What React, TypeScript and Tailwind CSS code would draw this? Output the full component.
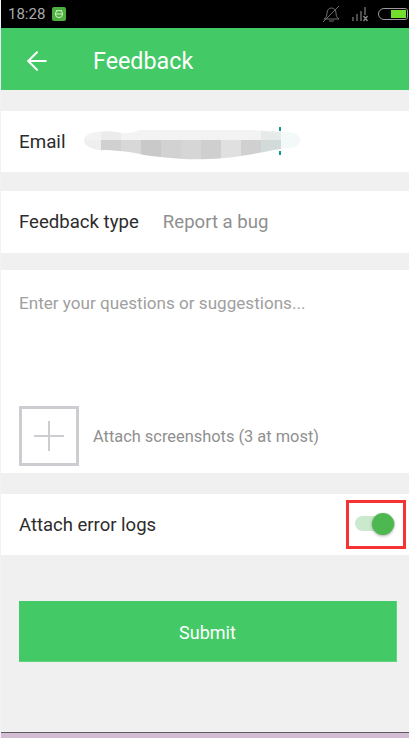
import React from 'react';
import { ArrowLeft } from 'lucide-react';

const StatusBar = () => (
  <div className="h-[28px] bg-black flex items-center justify-between pl-[7px] pr-[1px] shrink-0">
    <div className="flex items-center gap-[7px]">
      <span className="text-[15px] text-[#a8a8a8] leading-none">18:28</span>
      <div className="w-[14px] h-[14px] rounded-[2px] bg-[#4caf3f] flex items-center justify-center">
        <svg width="10" height="10" viewBox="0 0 10 10" fill="none" stroke="#d5f2c8" strokeWidth="1">
          <circle cx="5" cy="5" r="3.6" />
          <path d="M2 5h6M2.2 1l1 1.2M7.8 1l-1 1.2" />
        </svg>
      </div>
    </div>
    <div className="flex items-center">
      <svg width="20" height="18" viewBox="0 0 20 18" fill="none" stroke="#6e6e6e" strokeWidth="1" className="mr-[11px]">
        <path d="M3 14c2-1 3-3 3-6 0-3 2-5 4.500-5s4.500 2 4.500 5c0 3 1 5 3 6z" />
        <path d="M8 16h5M18 1 2 17" />
      </svg>
      <svg width="18" height="16" viewBox="0 0 18 16" fill="#4d4d4d" className="mr-[8px]">
        <rect x="0" y="11" width="2" height="4" />
        <rect x="4" y="8" width="2" height="7" />
        <rect x="8" y="5" width="2" height="10" />
        <rect x="12" y="1" width="2" height="8" />
        <path d="M11.500 10l4 5M15.500 10l-4 5" stroke="#8a8a8a" strokeWidth="1.300" />
      </svg>
      <div className="w-[30px] h-[12px] rounded-l-[6px] rounded-r-[3px] border border-[#9a9a9a] flex justify-end items-center pr-[1px]">
        <div className="w-[15px] h-[8px] bg-[#74de2e]" />
      </div>
    </div>
  </div>
);

const Smudge = () => (
  <svg width="216" height="34" viewBox="0 0 216 34" className="block">
    <defs>
      <filter id="b" x="-5%" y="-20%" width="110%" height="140%">
        <feGaussianBlur stdDeviation="0.600" />
      </filter>
      <clipPath id="c">
        <path d="M12 5C20 4 30 4 38 6 46 7 50 5 56 3L160 3C176 3 190 5 202 5 212 5 216 9 216 13 216 18 211 21 204 21L190 23C170 27 150 31 125 32 100 33 85 31 60 28 45 24 35 24 22 23 8 24 0 19 0 13 0 9 5 6 12 5Z" />
      </clipPath>
    </defs>
    <g clipPath="url(#c)" filter="url(#b)">
      <rect x="0" y="0" width="216" height="13" fill="#f3f3f3" />
      <rect x="0" y="13" width="17" height="21" fill="#efefef" />
      <rect x="17" y="0" width="20" height="13" fill="#ebebeb" />
      <rect x="17" y="13" width="20" height="21" fill="#d0d0d0" />
      <rect x="37" y="13" width="20" height="21" fill="#d8d8d8" />
      <rect x="57" y="13" width="20" height="21" fill="#c9c9c9" />
      <rect x="77" y="13" width="20" height="21" fill="#d2d2d2" />
      <rect x="97" y="13" width="20" height="21" fill="#d6d6d6" />
      <rect x="117" y="13" width="20" height="21" fill="#cfcfcf" />
      <rect x="137" y="13" width="20" height="21" fill="#e0e0e0" />
      <rect x="157" y="13" width="20" height="21" fill="#d0d0d0" />
      <rect x="177" y="0" width="20" height="13" fill="#e6ebea" />
      <rect x="177" y="13" width="20" height="21" fill="#d3dbda" />
      <rect x="197" y="0" width="19" height="34" fill="#f3f9f9" />
    </g>
    <rect x="195" y="0" width="2" height="4" fill="#119a8c" />
    <rect x="195" y="24" width="2" height="4" fill="#119a8c" />
  </svg>
);

export default function App() {
  return (
    <div className="w-[409px] h-[738px] overflow-hidden flex flex-col bg-[#f0f0f0] border-l border-l-[#edf3fb] font-['Roboto',sans-serif] text-[#2c2c2c]">
      <StatusBar />

      <div className="h-[62px] bg-[#43c965] flex items-center text-white shrink-0">
        <ArrowLeft size={30} strokeWidth={1.6} className="ml-[21px] mt-[3px]" />
        <span className="ml-[41px] mt-[6px] text-[23.300px] leading-none">Feedback</span>
      </div>

      <div className="mt-[21px] h-[61px] bg-white flex items-center pl-[18px] shrink-0">
        <span className="text-[18.800px] mt-[1px]">Email</span>
        <div className="ml-[18px] mt-[5px]">
          <Smudge />
        </div>
      </div>

      <div className="mt-[19px] h-[62px] bg-white flex items-center pl-[18px] shrink-0">
        <span className="text-[18.600px] mt-[2px]">Feedback type</span>
        <span className="ml-[24px] mt-[2px] text-[18.600px] text-[#8f8f8f]">Report a bug</span>
      </div>

      <div className="mt-[17px] h-[203px] bg-white flex flex-col justify-between pl-[18px] pt-[24px] pb-[7px] shrink-0">
        <span className="text-[17.100px] leading-[18px] text-[#a0a0a0]">Enter your questions or suggestions...</span>
        <div className="flex items-center">
          <div className="w-[60px] h-[60px] border-[3px] border-[#cdcdd1] flex items-center justify-center">
            <svg width="30" height="30" viewBox="0 0 30 30" stroke="#cdcdd1" strokeWidth="2">
              <path d="M15 0v30M0 15h30" />
            </svg>
          </div>
          <span className="ml-[14px] mt-[2px] text-[16.400px] text-[#8f8f8f]">Attach screenshots (3 at most)</span>
        </div>
      </div>

      <div className="mt-[21px] h-[61px] bg-white flex items-center justify-between pl-[18px] shrink-0">
        <span className="text-[18.500px] mt-[2px]">Attach error logs</span>
        <div className="relative mr-[14px] mb-[2px] w-[40px] h-[15px] rounded-full bg-[#cbe9cd]">
          <div className="absolute right-[1px] top-[-3px] w-[22px] h-[22px] rounded-full bg-[#4cb84f] shadow-[0_1px_3px_rgba(0,0,0,0.35)]" />
          <div className="absolute left-[-9px] top-[-16px] w-[60px] h-[49px] border-[3px] border-[#f53333]" />
        </div>
      </div>

      <button className="mt-[46px] ml-[18px] w-[378px] h-[61px] pt-[3px] bg-[#43c965] border-r border-b border-[#62d480] text-white text-[18px] shrink-0">
        Submit
      </button>

      <div className="mt-[70px] h-[1px] -ml-[1px] bg-[#5f5a60] shrink-0" />
      <div className="flex-1 -ml-[1px] bg-[#d3bdd5]" />
    </div>
  );
}
